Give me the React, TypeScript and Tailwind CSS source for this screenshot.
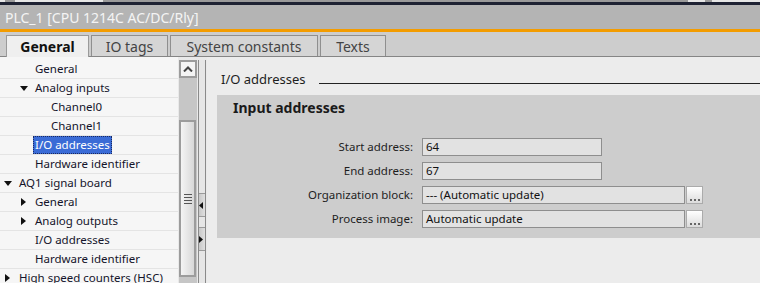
import React from "react";

const font = { fontFamily: '"Noto Sans", "Open Sans", sans-serif' };

type Row = {
  label: string;
  indent: number;
  tri?: "down" | "right";
  selected?: boolean;
};

const rows: Row[] = [
  { label: "General", indent: 35 },
  { label: "Analog inputs", indent: 35, tri: "down" },
  { label: "Channel0", indent: 51 },
  { label: "Channel1", indent: 51 },
  { label: "I/O addresses", indent: 35, selected: true },
  { label: "Hardware identifier", indent: 35 },
  { label: "AQ1 signal board", indent: 19, tri: "down" },
  { label: "General", indent: 35, tri: "right" },
  { label: "Analog outputs", indent: 35, tri: "right" },
  { label: "I/O addresses", indent: 35 },
  { label: "Hardware identifier", indent: 35 },
  { label: "High speed counters (HSC)", indent: 19, tri: "right" },
];

function Tri({ dir }: { dir: "down" | "right" }) {
  if (dir === "down")
    return (
      <svg width="8" height="5" viewBox="0 0 8 5" className="absolute" style={{ left: -13, top: 7 }}>
        <polygon points="0,0 8,0 4,5" fill="#111" />
      </svg>
    );
  return (
    <svg width="5" height="8" viewBox="0 0 5 8" className="absolute" style={{ left: -12, top: 5 }}>
      <polygon points="0,0 5,4 0,8" fill="#111" />
    </svg>
  );
}

function Ellipsis() {
  return (
    <div className="w-[17px] h-[18px] ml-[1px] border border-[#ababab] bg-gradient-to-b from-[#ffffff] to-[#dcdcdc] flex items-end justify-center pb-[2px] gap-[2px]">
      <div className="w-[2px] h-[2px] bg-[#666]" />
      <div className="w-[2px] h-[2px] bg-[#666]" />
      <div className="w-[2px] h-[2px] bg-[#666]" />
    </div>
  );
}

function Field({ label, value, w, btn }: { label: string; value: string; w: number; btn?: boolean }) {
  return (
    <div className="flex items-center h-[18px] mb-[6px]">
      <div className="w-[205px] text-right pr-[9px] text-[11.5px] text-[#1e1e1e]">{label}</div>
      <div
        className="h-[18px] border border-[#8e8e8e] bg-[#e2e2e2] text-[11.5px] text-[#111] pl-[3px] leading-[16px]"
        style={{ width: w }}
      >
        {value}
      </div>
      {btn && <Ellipsis />}
    </div>
  );
}

export default function App() {
  return (
    <div className="w-[760px] h-[283px] overflow-hidden bg-[#ececec] flex flex-col" style={font}>
      {/* top strip */}
      <div className="h-[2px] bg-[#9a9a9a] flex">
        <div className="w-[5px] bg-[#e6e6e6]" />
        <div className="w-[10px]" />
        <div className="w-[88px] bg-[#e6e6e6]" />
        <div className="flex-1" />
        <div className="w-[17px] bg-[#e6e6e6]" />
        <div className="w-[7px]" />
        <div className="w-[48px] bg-[#e6e6e6]" />
      </div>
      <div className="h-[3px] bg-[#1e2233]" />
      {/* title bar */}
      <div className="h-[24px] bg-[#b4b4b4] flex items-center pl-[5px] text-[14px] text-[#f4f4f4]">
        PLC_1 [CPU 1214C AC/DC/Rly]
      </div>
      <div className="h-[3px] bg-[#f39c00]" />
      {/* tab bar */}
      <div className="h-[25px] bg-[#cdcdcd] border-b border-[#858585] flex items-end pl-[6px] gap-[2px]">
        <div className="w-[83px] bg-[#efefef] border border-b-0 border-[#9a9a9a] flex items-center justify-center text-[14px] font-bold text-[#111] -mb-[1px] h-[22px]">
          General
        </div>
        <div className="w-[77px] h-[21px] bg-[#d5d5d5] border border-b-0 border-[#8f8f8f] flex items-center justify-center text-[14px] text-[#444]">
          IO tags
        </div>
        <div className="w-[148px] h-[21px] bg-[#d5d5d5] border border-b-0 border-[#8f8f8f] flex items-center justify-center text-[14px] text-[#444]">
          System constants
        </div>
        <div className="w-[66px] h-[21px] bg-[#d5d5d5] border border-b-0 border-[#8f8f8f] flex items-center justify-center text-[14px] text-[#444]">
          Texts
        </div>
      </div>
      {/* body */}
      <div className="flex-1 flex min-h-0">
        {/* tree */}
        <div className="w-[178px] bg-[#f6f6f6] pt-[3px] overflow-hidden">
          {rows.map((r, i) => (
            <div key={i} className="h-[19px] border-b border-[#e4e4e4] relative">
              <div className="absolute top-0 h-[18px]" style={{ left: r.indent - 2 }}>
                {r.tri && <Tri dir={r.tri} />}
                <div
                  className={
                    r.selected
                      ? "h-[18px] px-[2px] bg-[#3a6bd6] text-white text-[11.5px] leading-[18px] whitespace-nowrap outline outline-1 outline-dotted outline-[#1a2a60] -outline-offset-1"
                      : "h-[18px] px-[2px] text-[11.5px] leading-[18px] whitespace-nowrap text-[#14142a]"
                  }
                >
                  {r.label}
                </div>
              </div>
            </div>
          ))}
        </div>
        {/* scrollbar */}
        <div className="w-[20px] bg-[#e9e9e9] pt-[3px] flex flex-col items-center">
          <div className="w-[18px] h-[18px] bg-[#f4f4f4] border-2 border-[#9c9c9c] flex items-center justify-center">
            <svg width="10" height="6" viewBox="0 0 10 6">
              <polyline points="1,5.5 5,1.5 9,5.5" fill="none" stroke="#444" strokeWidth="2" />
            </svg>
          </div>
          <div className="w-[18px] h-[42px] bg-[#c6c6c6]" />
          <div className="w-[18px] h-[157px] bg-[#c6c6c6] flex">
            <div className="w-[17px] h-[157px] border-2 border-[#9c9c9c] bg-gradient-to-r from-[#f4f4f4] via-[#e6e6e6] to-[#d8d8d8] flex items-center justify-center">
              <div className="flex flex-col gap-[2px]">
                <div className="w-[8px] h-[1px] bg-[#555]" />
                <div className="w-[8px] h-[1px] bg-[#555]" />
                <div className="w-[8px] h-[1px] bg-[#555]" />
                <div className="w-[8px] h-[1px] bg-[#555]" />
              </div>
            </div>
          </div>
          <div className="w-[18px] flex-1 bg-[#c6c6c6]" />
        </div>
        {/* splitter */}
        <div className="w-[9px] bg-[#e9e9e9] pt-[3px] flex">
          <div className="w-[8px] border-x border-[#8a8a8a] bg-[#e6e6e6] flex flex-col">
            <div className="h-[133px]" />
            <div className="h-[24px] border-y border-[#9a9a9a] bg-gradient-to-r from-[#c8c8c8] to-[#e0e0e0] flex items-center">
              <svg width="4" height="7" viewBox="0 0 4 7">
                <polygon points="4,0 0,3.5 4,7" fill="#111" />
              </svg>
            </div>
            <div className="h-[10px]" />
            <div className="h-[24px] border-y border-[#9a9a9a] bg-gradient-to-r from-[#c8c8c8] to-[#e0e0e0] flex items-center">
              <svg width="4" height="7" viewBox="0 0 4 7">
                <polygon points="0,0 4,3.5 0,7" fill="#111" />
              </svg>
            </div>
          </div>
        </div>
        {/* content */}
        <div className="flex-1 bg-[#ececec] pl-[10px] pt-[13px]">
          <div className="flex items-end h-[18px] pl-[4px]">
            <span className="text-[13px] text-[#1e1e1e] leading-[18px]">I/O addresses</span>
            <div className="flex-1 h-[1.5px] bg-[#222] ml-[13px] mb-[4px]" />
          </div>
          <div className="mt-[7px] bg-[#cdcdcd] h-[143px] pt-[4px]">
            <div className="pl-[16px] text-[14px] font-bold text-[#1a1a1a] leading-[18px]">Input addresses</div>
            <div className="mt-[21px]">
              <Field label="Start address:" value="64" w={180} />
              <Field label="End address:" value="67" w={180} />
              <Field label="Organization block:" value="--- (Automatic update)" w={263} btn />
              <Field label="Process image:" value="Automatic update" w={263} btn />
            </div>
          </div>
        </div>
      </div>
    </div>
  );
}
